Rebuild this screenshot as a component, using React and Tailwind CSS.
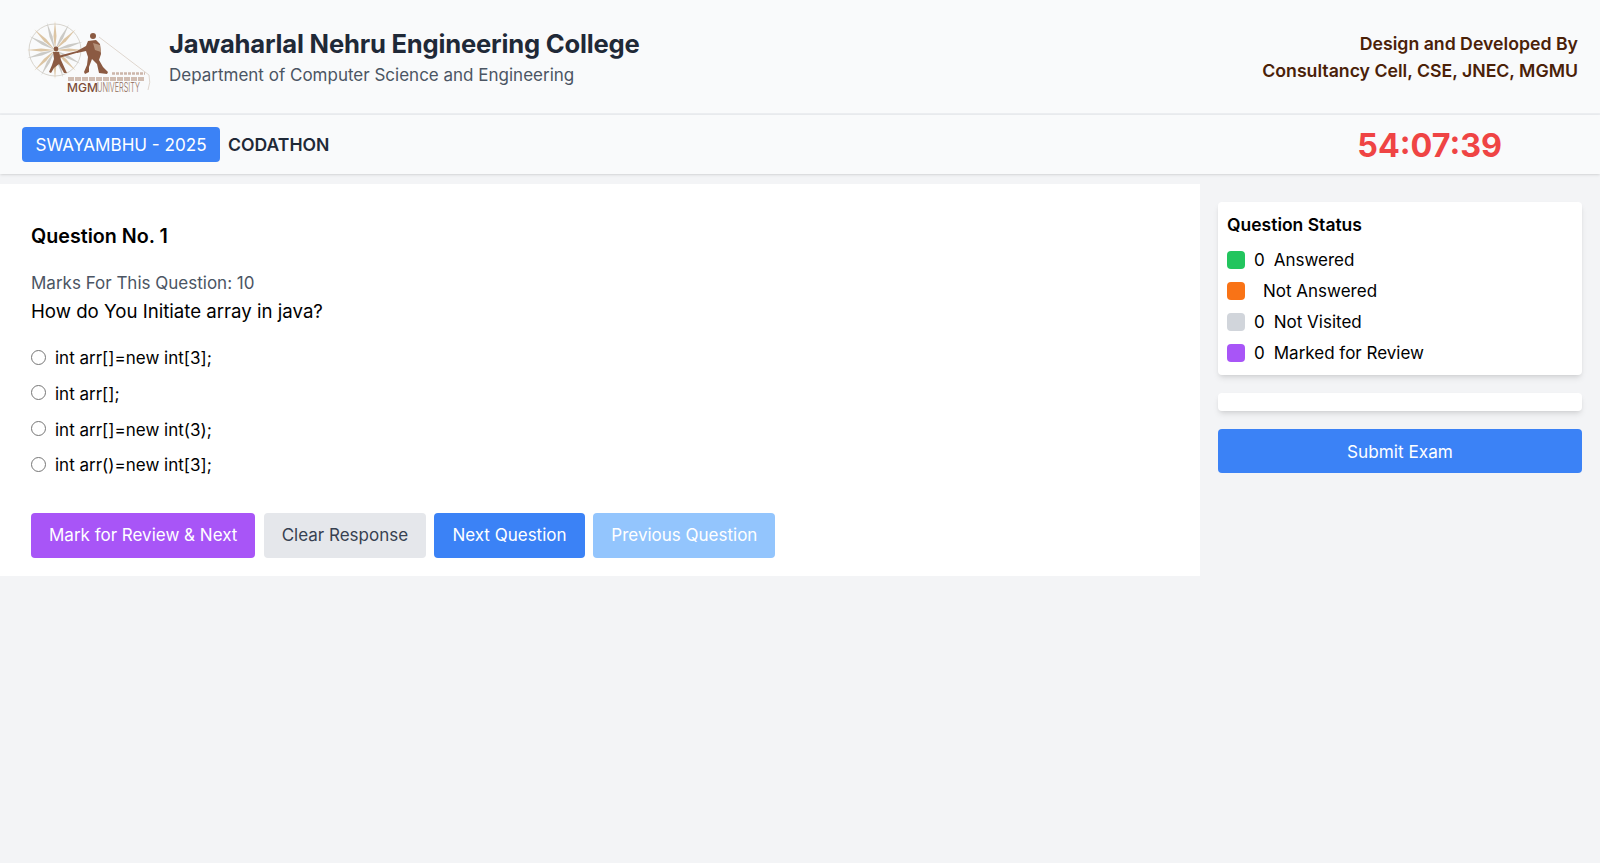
import React from "react";

function Logo() {
  const spokes = [0, 22.5, 45, 67.5, 90, 112.5, 135, 157.5];
  return (
    <svg width="126" height="94" viewBox="0 0 126 94" className="block">
      <g transform="translate(28 40)">
        <circle r="26" fill="none" stroke="#cfcac2" strokeWidth="0.8" />
        {spokes.map((a, i) => (
          <g key={a} transform={`rotate(${a + (i % 2 ? 6 : 0)})`}>
            <path d="M0 0L-1.5 -14L0 -29L1.5 -14Z" fill={i % 2 ? "#cbcac6" : "#dcc5a4"} />
            <path d="M0 0L-1.5 14L0 29L1.5 14Z" fill={i % 2 ? "#cbcac6" : "#dcc5a4"} />
          </g>
        ))}
      </g>
      <path d="M72 27L122 65Q124 72 121 80" fill="none" stroke="#cdbdb0" strokeWidth="0.6" />
      <g fill="#8b5a42">
        <circle cx="29" cy="39" r="2.4" />
        <path d="M26 42L32 42L34 50L39 61L40 63L37 63L32 54L27 58L24 63L22 62L25 55L27 49Z" />
        <path d="M31 46L50 41L51 42.5L32 48Z" />
        <circle cx="66" cy="26" r="3" />
        <path d="M61 31L69 30L73 34L74 44L72 50L76 57L81 62L80 64L72 63L70 54L65 49L62 57L62 62L58 64L57 62L60 55L61 47L59 41L50 43L50 41L59 36Z" />
        <path d="M66 33L73 35L74 42L68 40Z" fill="#b5927a" />
      </g>
      <path d="M85 63.5H118" stroke="#a87f69" strokeWidth="2.4" strokeDasharray="3 1" opacity="0.55" />
      <path d="M41 69H118" stroke="#a87f69" strokeWidth="4" strokeDasharray="6 1" opacity="0.5" />
      <text x="40" y="82" fontFamily="Inter, sans-serif" fontSize="12" fill="#7c4c38" fontWeight="500">MGM</text>
      <text transform="translate(70 82) scale(0.59 1)" fontFamily="Inter, sans-serif" fontSize="12.4" fill="#8f6a58" fontWeight="300">UNIVERSITY</text>
    </svg>
  );
}

function Option({ text }) {
  return (
    <label className="flex items-center h-[20px] mb-[15.7px]">
      <input type="radio" name="q" className="w-[15px] h-[15px] m-0 mb-[4px] mr-[9px] appearance-none rounded-full border border-[#767676] bg-white" />
      <span>{text}</span>
    </label>
  );
}

function Status({ color, count, label }) {
  return (
    <div className="flex items-center h-[31px]">
      <span className={`w-[18px] h-[18px] mb-[2px] rounded mr-[9px] ${color}`} />
      <span>{count}</span>
      <span className="ml-[9px] whitespace-pre">{label}</span>
    </div>
  );
}

export default function App() {
  return (
    <div className="min-h-[863px] bg-[#f3f4f6] font-['Inter',sans-serif] text-black">
      <header className="h-[115px] bg-[#f9fafb] border-b-2 border-[#eceef1] flex items-center justify-between pl-[27px] pr-[22px]">
        <div className="flex items-center">
          <Logo />
          <div className="ml-[16px] mt-[4px]">
            <h1 className="text-[25.6px] leading-8 font-bold text-[#1f2937] tracking-[-0.2px]">Jawaharlal Nehru Engineering College</h1>
            <p className="text-[17px] leading-7 text-[#4b5563] mt-[1px]">Department of Computer Science and Engineering</p>
          </div>
        </div>
        <div className="text-right font-semibold text-[#4a2108] text-[17.7px] leading-[27px] mt-[1px]">
          <div>Design and Developed By</div>
          <div>Consultancy Cell, CSE, JNEC, MGMU</div>
        </div>
      </header>
      <div className="h-[59px] bg-[#f9fafb] shadow flex items-center pl-[22px] pr-[98px]">
        <span className="h-[35px] pt-[1px] flex items-center bg-[#3b82f6] text-white rounded px-[13.5px] text-[17.1px]">SWAYAMBHU - 2025</span>
        <span className="ml-[8px] mt-[1px] font-semibold text-[#1f2937] text-[17.6px]">CODATHON</span>
        <span className="ml-auto mt-[3px] text-[#ef4444] font-bold text-[32.3px] leading-none">54:07:39</span>
      </div>
      <main className="flex mt-[10px]">
        <section className="w-3/4 h-[392px] bg-white pt-[38px] pl-[31px]">
          <h2 className="text-[19.7px] leading-7 font-semibold">Question No. 1</h2>
          <p className="mt-[21px] text-[17px] leading-6 text-[#4b5563]">Marks For This Question: 10</p>
          <p className="mt-[1px] text-[18.65px] leading-[30px]">How do You Initiate array in java?</p>
          <div className="mt-[23px] text-[17px]">
            <Option text="int arr[]=new int[3];" />
            <Option text="int arr[];" />
            <Option text="int arr[]=new int(3);" />
            <Option text="int arr()=new int[3];" />
          </div>
          <div className="flex gap-[8.8px] mt-[37px] text-[17px]">
            <button className="h-[45px] pt-[1px] px-[18px] rounded bg-[#a855f7] text-white">Mark for Review &amp; Next</button>
            <button className="h-[45px] pt-[1px] px-[17.5px] rounded bg-[#e5e7eb] text-[#374151]">Clear Response</button>
            <button className="h-[45px] pt-[1px] px-[18px] rounded bg-[#3b82f6] text-white">Next Question</button>
            <button className="h-[45px] pt-[1px] px-[18px] rounded bg-[#93c5fd] text-white">Previous Question</button>
          </div>
        </section>
        <aside className="w-1/4 pt-[18px] pl-[18px] pr-[18px]">
          <div className="h-[173px] bg-white rounded shadow-md px-[9px] pt-[9px] text-[17px]">
            <h3 className="text-[17.5px] leading-[28px] font-semibold mb-[6.5px]">Question Status</h3>
            <Status color="bg-[#22c55e]" count="0" label="Answered" />
            <Status color="bg-[#f97316]" count="" label="Not Answered" />
            <Status color="bg-[#d1d5db]" count="0" label="Not Visited" />
            <Status color="bg-[#a855f7]" count="0" label="Marked for Review" />
          </div>
          <div className="h-[18px] mt-[18px] bg-white rounded shadow-md" />
          <button className="w-full h-[44px] mt-[18px] pt-[1px] rounded bg-[#3b82f6] text-white text-[17.2px]">Submit Exam</button>
        </aside>
      </main>
    </div>
  );
}
